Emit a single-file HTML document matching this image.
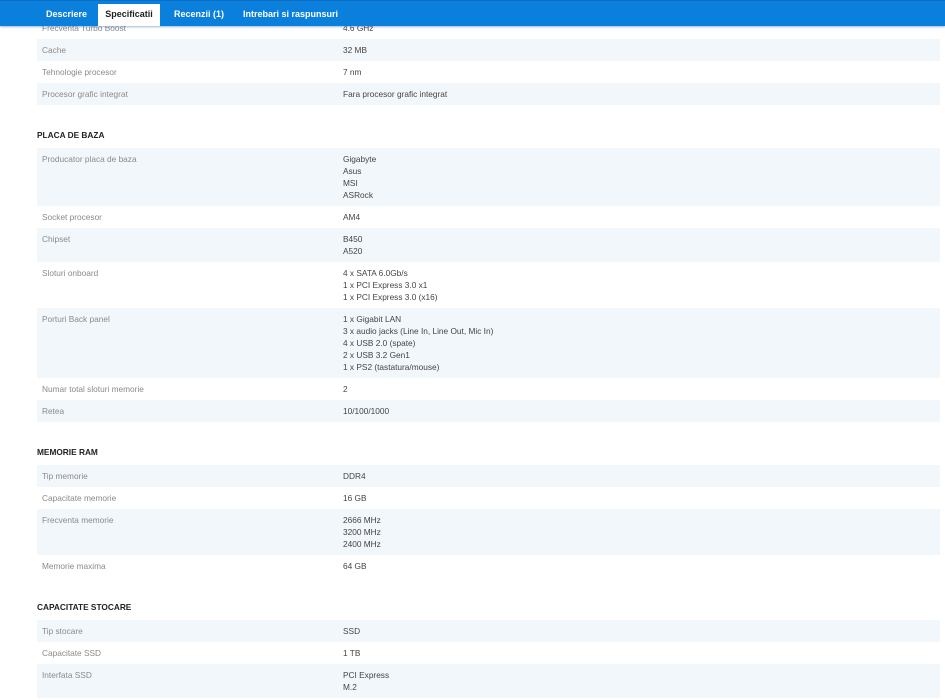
<!DOCTYPE html>
<html><head><meta charset="utf-8"><style>
*{margin:0;padding:0;box-sizing:border-box}
body{width:945px;height:700px;overflow:hidden;background:#fff;font-family:"Liberation Sans",sans-serif;position:relative}
.bar{position:absolute;left:0;top:0;width:945px;height:26px;background:#0a7fdc;border-top:1px solid #0a6fc4;box-shadow:0 1px 2px rgba(0,80,160,.4);z-index:2}
.tab{position:absolute;top:0;height:26px;line-height:26px;color:#fff;font-size:9px;font-weight:bold}
.tab.act{top:3px;height:22px;line-height:21px;background:#fff;color:#222;left:98px;width:62px;text-align:center;font-weight:bold}
.content{position:absolute;left:37px;top:17px;width:903px}
.r{display:flex;padding:4.5px 0 5.5px;font-size:8.3px;line-height:12px}
.r.s{background:#f2f7fc}
.l{width:306px;padding-left:5px;color:#8a8a8a}
.v{color:#444}
.h{height:43px;padding-top:24px;font-size:8.3px;font-weight:bold;color:#222;line-height:12px}
</style></head><body>
<div class="bar">
<div class="tab" style="left:46px">Descriere</div>
<div class="tab act">Specificatii</div>
<div class="tab" style="left:174px">Recenzii (1)</div>
<div class="tab" style="left:243px">Intrebari si raspunsuri</div>
</div>
<div class="content">
<div class="r"><div class="l">Frecventa Turbo Boost</div><div class="v">4.6 GHz</div></div>
<div class="r s"><div class="l">Cache</div><div class="v">32 MB</div></div>
<div class="r"><div class="l">Tehnologie procesor</div><div class="v">7 nm</div></div>
<div class="r s"><div class="l">Procesor grafic integrat</div><div class="v">Fara procesor grafic integrat</div></div>
<div class="h">PLACA DE BAZA</div>
<div class="r s"><div class="l">Producator placa de baza</div><div class="v">Gigabyte<br>Asus<br>MSI<br>ASRock</div></div>
<div class="r"><div class="l">Socket procesor</div><div class="v">AM4</div></div>
<div class="r s"><div class="l">Chipset</div><div class="v">B450<br>A520</div></div>
<div class="r"><div class="l">Sloturi onboard</div><div class="v">4 x SATA 6.0Gb/s<br>1 x PCI Express 3.0 x1<br>1 x PCI Express 3.0 (x16)</div></div>
<div class="r s"><div class="l">Porturi Back panel</div><div class="v">1 x Gigabit LAN<br>3 x audio jacks (Line In, Line Out, Mic In)<br>4 x USB 2.0 (spate)<br>2 x USB 3.2 Gen1<br>1 x PS2 (tastatura/mouse)</div></div>
<div class="r"><div class="l">Numar total sloturi memorie</div><div class="v">2</div></div>
<div class="r s"><div class="l">Retea</div><div class="v">10/100/1000</div></div>
<div class="h">MEMORIE RAM</div>
<div class="r s"><div class="l">Tip memorie</div><div class="v">DDR4</div></div>
<div class="r"><div class="l">Capacitate memorie</div><div class="v">16 GB</div></div>
<div class="r s"><div class="l">Frecventa memorie</div><div class="v">2666 MHz<br>3200 MHz<br>2400 MHz</div></div>
<div class="r"><div class="l">Memorie maxima</div><div class="v">64 GB</div></div>
<div class="h">CAPACITATE STOCARE</div>
<div class="r s"><div class="l">Tip stocare</div><div class="v">SSD</div></div>
<div class="r"><div class="l">Capacitate SSD</div><div class="v">1 TB</div></div>
<div class="r s"><div class="l">Interfata SSD</div><div class="v">PCI Express<br>M.2</div></div>
</div>
</body></html>
